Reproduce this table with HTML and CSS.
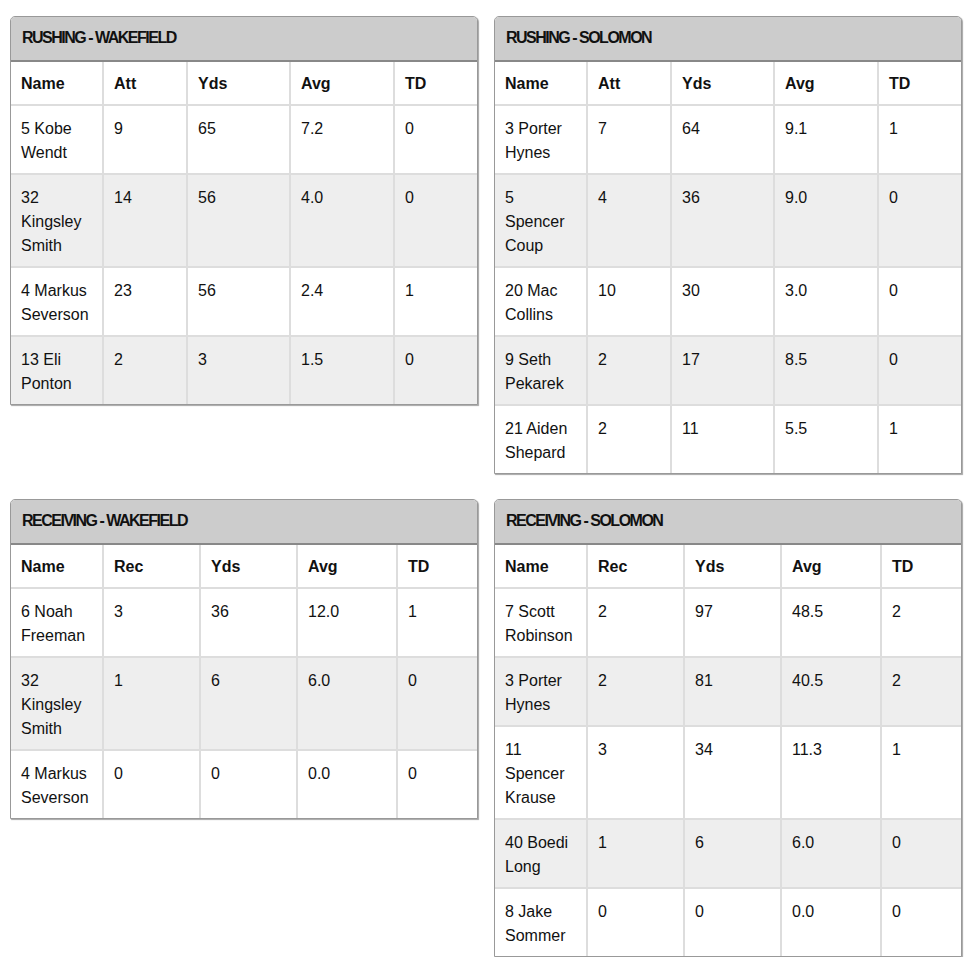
FILE: index.html
```html
<!DOCTYPE html>
<html>
<head>
<meta charset="utf-8">
<link rel="stylesheet" href="styles.css">
</head>
<body>
<div class="grid">
  <div class="panel">
    <div class="panel-head">RUSHING - WAKEFIELD</div>
    <table class="stats rush">
      <colgroup><col class="c1"><col class="c2"><col class="c3"><col class="c4"><col class="c5"></colgroup>
      <thead><tr><th>Name</th><th>Att</th><th>Yds</th><th>Avg</th><th>TD</th></tr></thead>
      <tbody>
        <tr><td>5 Kobe Wendt</td><td>9</td><td>65</td><td>7.2</td><td>0</td></tr>
        <tr><td>32 Kingsley Smith</td><td>14</td><td>56</td><td>4.0</td><td>0</td></tr>
        <tr><td>4 Markus Severson</td><td>23</td><td>56</td><td>2.4</td><td>1</td></tr>
        <tr><td>13 Eli Ponton</td><td>2</td><td>3</td><td>1.5</td><td>0</td></tr>
      </tbody>
    </table>
  </div>
  <div class="panel">
    <div class="panel-head">RUSHING - SOLOMON</div>
    <table class="stats rush">
      <colgroup><col class="c1"><col class="c2"><col class="c3"><col class="c4"><col class="c5"></colgroup>
      <thead><tr><th>Name</th><th>Att</th><th>Yds</th><th>Avg</th><th>TD</th></tr></thead>
      <tbody>
        <tr><td>3 Porter Hynes</td><td>7</td><td>64</td><td>9.1</td><td>1</td></tr>
        <tr><td>5 Spencer Coup</td><td>4</td><td>36</td><td>9.0</td><td>0</td></tr>
        <tr><td>20 Mac Collins</td><td>10</td><td>30</td><td>3.0</td><td>0</td></tr>
        <tr><td>9 Seth Pekarek</td><td>2</td><td>17</td><td>8.5</td><td>0</td></tr>
        <tr><td>21 Aiden Shepard</td><td>2</td><td>11</td><td>5.5</td><td>1</td></tr>
      </tbody>
    </table>
  </div>
  <div class="panel">
    <div class="panel-head">RECEIVING - WAKEFIELD</div>
    <table class="stats recv">
      <colgroup><col class="c1"><col class="c2"><col class="c3"><col class="c4"><col class="c5"></colgroup>
      <thead><tr><th>Name</th><th>Rec</th><th>Yds</th><th>Avg</th><th>TD</th></tr></thead>
      <tbody>
        <tr><td>6 Noah Freeman</td><td>3</td><td>36</td><td>12.0</td><td>1</td></tr>
        <tr><td>32 Kingsley Smith</td><td>1</td><td>6</td><td>6.0</td><td>0</td></tr>
        <tr><td>4 Markus Severson</td><td>0</td><td>0</td><td>0.0</td><td>0</td></tr>
      </tbody>
    </table>
  </div>
  <div class="panel">
    <div class="panel-head">RECEIVING - SOLOMON</div>
    <table class="stats recv">
      <colgroup><col class="c1"><col class="c2"><col class="c3"><col class="c4"><col class="c5"></colgroup>
      <thead><tr><th>Name</th><th>Rec</th><th>Yds</th><th>Avg</th><th>TD</th></tr></thead>
      <tbody>
        <tr><td>7 Scott Robinson</td><td>2</td><td>97</td><td>48.5</td><td>2</td></tr>
        <tr><td>3 Porter Hynes</td><td>2</td><td>81</td><td>40.5</td><td>2</td></tr>
        <tr><td>11 Spencer Krause</td><td>3</td><td>34</td><td>11.3</td><td>1</td></tr>
        <tr><td>40 Boedi Long</td><td>1</td><td>6</td><td>6.0</td><td>0</td></tr>
        <tr><td>8 Jake Sommer</td><td>0</td><td>0</td><td>0.0</td><td>0</td></tr>
      </tbody>
    </table>
  </div>
</div>
</body>
</html>
```

FILE: styles.css
```css
html, body {
  margin: 0;
  padding: 0;
  background: #fff;
}
body {
  font-family: "Liberation Sans", Arial, sans-serif;
  font-size: 16px;
  color: #111;
}
.grid {
  display: grid;
  grid-template-columns: 468px 468px;
  column-gap: 16px;
  row-gap: 25px;
  align-items: start;
  padding: 16px 0 0 10px;
}
.panel {
  border: 1px solid #999;
  border-radius: 5px 5px 0 0;
  box-shadow: 1px 1px 1px rgba(0,0,0,0.35);
  background: #fff;
  overflow: hidden;
}
.panel-head {
  background: #ccc;
  height: 43px;
  line-height: 42px;
  padding-left: 11px;
  font-weight: bold;
  font-size: 16px;
  letter-spacing: -1.5px;
  color: #111;
  border-bottom: 2px solid #888;
}
.stats {
  width: 100%;
  border-collapse: collapse;
  table-layout: fixed;
}
.stats th, .stats td {
  border: 2px solid #ddd;
  padding: 11px 10px 8px 10px;
  line-height: 24px;
  text-align: left;
  vertical-align: top;
  font-size: 16px;
}
.stats th {
  padding: 10px 10px 8px 10px;
  font-weight: bold;
}
.stats tr > :first-child { border-left: 0; }
.stats tr > :last-child { border-right: 0; }
.stats tbody tr:last-child td { border-bottom: 0; }
.stats thead th { border-top: 0; }
.stats tbody tr:nth-child(even) td { background: #eee; }
.rush .c1 { width: 92px; }
.rush .c2 { width: 84px; }
.rush .c3 { width: 103px; }
.rush .c4 { width: 104px; }
.rush .c5 { width: 83px; }
.recv .c1 { width: 92px; }
.recv .c2 { width: 97px; }
.recv .c3 { width: 97px; }
.recv .c4 { width: 100px; }
.recv .c5 { width: 80px; }
```
